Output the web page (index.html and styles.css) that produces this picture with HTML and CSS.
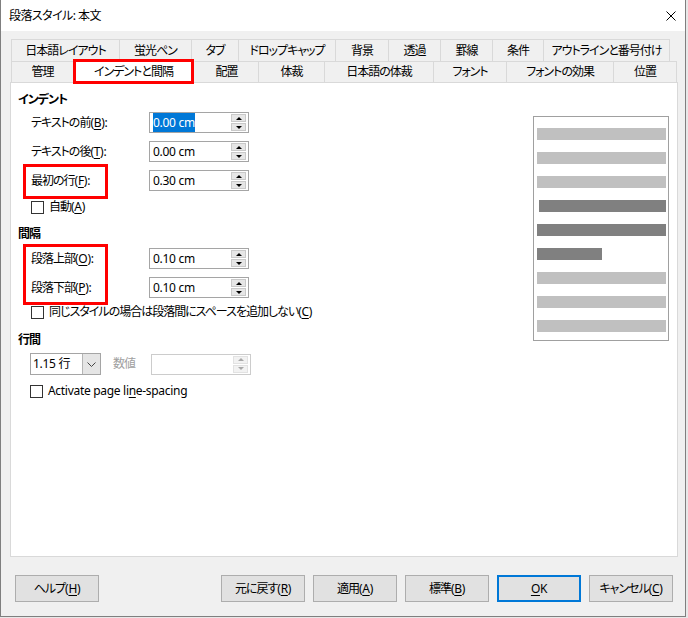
FILE: index.html
```html
<!DOCTYPE html>
<html lang="ja">
<head>
<meta charset="utf-8">
<title>段落スタイル: 本文</title>
<link rel="stylesheet" href="styles.css">
</head>
<body>
<div class="window">
  <div class="titlebar">
    <span class="title">段落スタイル: 本文</span>
    <svg class="close" width="10" height="10" viewBox="0 0 10 10"><path d="M0.5 0.5 L9.5 9.5 M9.5 0.5 L0.5 9.5" stroke="#000" stroke-width="1" fill="none"/></svg>
  </div>
  <div class="content">
    <div class="tabrow r1">
      <div class="tab w108">日本語レイアウト</div>
      <div class="tab w72">蛍光ペン</div>
      <div class="tab w47">タブ</div>
      <div class="tab w97">ドロップキャップ</div>
      <div class="tab w53">背景</div>
      <div class="tab w52">透過</div>
      <div class="tab w52">罫線</div>
      <div class="tab w51">条件</div>
      <div class="tab w127 last">アウトラインと番号付け</div>
    </div>
    <div class="tabrow r2">
      <div class="tab w62">管理</div>
      <div class="tab sel w121">インデントと間隔</div>
      <div class="tab w64 after-sel">配置</div>
      <div class="tab w66">体裁</div>
      <div class="tab w109">日本語の体裁</div>
      <div class="tab w73">フォント</div>
      <div class="tab w107">フォントの効果</div>
      <div class="tab w64 last">位置</div>
    </div>
    <div class="panel">
      <div class="form">
        <div class="hdr">インデント</div>
        <div class="frow g4">
          <span class="lbl">テキストの前<span class="latin">(<u>B</u>):</span></span>
          <div class="spin-field"><span class="val"><span class="selected">0.00 cm</span></span><span class="spin"><i class="up"></i><i class="dn"></i></span></div>
        </div>
        <div class="frow g8">
          <span class="lbl">テキストの後<span class="latin">(<u>T</u>):</span></span>
          <div class="spin-field"><span class="val">0.00 cm</span><span class="spin"><i class="up"></i><i class="dn"></i></span></div>
        </div>
        <div class="frow g8 annot annot-one">
          <span class="lbl">最初の行<span class="latin">(<u>F</u>):</span></span>
          <div class="spin-field"><span class="val">0.30 cm</span><span class="spin"><i class="up"></i><i class="dn"></i></span></div>
        </div>
        <div class="crow g8"><span class="box"></span><span>自動<span class="latin">(<u>A</u>)</span></span></div>

        <div class="hdr g11">間隔</div>
        <div class="group g6 annot annot-two">
          <div class="frow">
            <span class="lbl">段落上部<span class="latin">(<u>O</u>):</span></span>
            <div class="spin-field"><span class="val">0.10 cm</span><span class="spin"><i class="up"></i><i class="dn"></i></span></div>
          </div>
          <div class="frow g8">
            <span class="lbl">段落下部<span class="latin">(<u>P</u>):</span></span>
            <div class="spin-field"><span class="val">0.10 cm</span><span class="spin"><i class="up"></i><i class="dn"></i></span></div>
          </div>
        </div>
        <div class="crow g6"><span class="box"></span><span>同じスタイルの場合は段落間にスペースを追加しない<span class="latin">(<u>C</u>)</span></span></div>

        <div class="hdr g12">行間</div>
        <div class="drow g5">
          <div class="dropdown">
            <span class="dd-text">1.15 行</span>
            <span class="dd-btn"><svg width="9" height="5" viewBox="0 0 9 5"><path d="M0.5 0.5 L4.5 4.5 L8.5 0.5" stroke="#444" stroke-width="1" fill="none"/></svg></span>
          </div>
          <span class="num-lbl">数値</span>
          <div class="spin-field disabled"><span class="val"></span><span class="spin"><i class="up"></i><i class="dn"></i></span></div>
        </div>
        <div class="crow g8 c-act"><span class="box"></span><span class="latin">Activate page li<u>n</u>e-spacing</span></div>
      </div>
      <div class="preview">
        <div class="bar"></div>
        <div class="bar"></div>
        <div class="bar"></div>
        <div class="bar dark indent"></div>
        <div class="bar dark"></div>
        <div class="bar dark short"></div>
        <div class="bar"></div>
        <div class="bar"></div>
        <div class="bar"></div>
      </div>
    </div>
    <div class="footer">
      <div class="btn">ヘルプ<span class="latin">(<u>H</u>)</span></div>
      <div class="btn-group">
        <div class="btn">元に戻す<span class="latin">(<u>R</u>)</span></div>
        <div class="btn">適用<span class="latin">(<u>A</u>)</span></div>
        <div class="btn">標準<span class="latin">(<u>B</u>)</span></div>
        <div class="btn default"><span class="latin"><u>O</u>K</span></div>
        <div class="btn">キャンセル<span class="latin">(<u>C</u>)</span></div>
      </div>
    </div>
  </div>
</div>
</body>
</html>
```
FILE: styles.css
```css
* { box-sizing: border-box; }
html, body { margin: 0; padding: 0; }
body {
  width: 688px;
  height: 618px;
  overflow: hidden;
  background: #e8e8e8;
  font-family: "Noto Sans", "Noto Sans CJK JP", sans-serif;
  font-size: 12px;
  line-height: 16px;
  color: #000;
  font-feature-settings: "palt" 1;
  letter-spacing: -1px;
}
.latin, .val, .dd-text { letter-spacing: -0.3px; }
u { text-decoration: underline; text-underline-offset: 2px; text-decoration-thickness: 1px; }

.window {
  width: 686px;
  height: 617px;
  border: 1px solid #7f7f7f;
  border-top: none;
  background: #f0f0f0;
  display: flex;
  flex-direction: column;
}
.titlebar {
  flex: none;
  height: 31px;
  background: #fff;
  display: flex;
  align-items: center;
  justify-content: space-between;
  padding: 0 9px 0 8px;
}
.title { font-size: 12px; letter-spacing: -0.55px; }
.close { display: block; }

.content {
  flex: 1;
  display: flex;
  flex-direction: column;
  padding: 8px 7px 0 9px;
}

/* tabs */
.tabrow { display: flex; margin-left: 1px; flex: none; }
.tabrow.r1 { height: 22px; }
.tabrow.r2 { height: 21px; }
.tab {
  flex: none;
  height: 100%;
  border-left: 1px solid #d9d9d9;
  border-top: 1px solid #d9d9d9;
  background: #f0f0f0;
  display: flex;
  align-items: center;
  justify-content: center;
  white-space: nowrap;
}
.tab.last { border-right: 1px solid #d9d9d9; }
.tab.sel {
  height: 25px;
  margin-top: -2px;
  border: 3px solid #ff0000;
  background: #fff;
  position: relative;
  z-index: 1;
}
.tab.after-sel { border-left-color: transparent; }
.w47 { width: 47px; } .w51 { width: 51px; } .w52 { width: 52px; } .w53 { width: 53px; }
.w62 { width: 62px; } .w64 { width: 64px; } .w66 { width: 66px; } .w72 { width: 72px; }
.w73 { width: 73px; } .w97 { width: 97px; } .w107 { width: 107px; } .w108 { width: 108px; }
.w109 { width: 109px; } .w121 { width: 121px; } .w127 { width: 127px; }

/* panel */
.panel {
  flex: none;
  width: 668px;
  height: 475px;
  border: 1px solid #d9d9d9;
  background: #fff;
  display: flex;
}
.form { flex: 1; padding: 9px 0 0 7px; display: flex; flex-direction: column; }
.hdr { height: 16px; font-weight: 700; }
.g4 { margin-top: 4px; } .g5 { margin-top: 5px; } .g6 { margin-top: 6px; }
.g8 { margin-top: 8px; } .g11 { margin-top: 11px; } .g12 { margin-top: 12px; }

.frow { height: 21px; display: flex; align-items: center; padding-left: 13px; }
.lbl { width: 118px; flex: none; white-space: nowrap; }
.group { display: flex; flex-direction: column; }
.annot { position: relative; }
.annot::before {
  content: "";
  position: absolute;
  left: 5px;
  width: 79px;
  border: 3px solid #ff0000;
  pointer-events: none;
}
.annot-one::before { top: -6px; height: 29px; }
.annot-two::before { top: -4px; height: 55px; }

.spin-field {
  flex: none;
  width: 100px;
  height: 21px;
  border: 1px solid #a5a5a5;
  background: #fff;
  display: flex;
  align-items: center;
}
.val { flex: 1; padding-left: 3px; white-space: nowrap; }
.selected { background: #0078d7; color: #fff; padding: 1px 0; }
.spin {
  flex: none;
  width: 15px;
  height: 17px;
  margin-right: 2px;
  display: flex;
  flex-direction: column;
  gap: 1px;
}
.spin i {
  flex: 1;
  background: #e6e6e6;
  border: 1px solid #c9c9c9;
  display: flex;
  align-items: center;
  justify-content: center;
}
.spin i::after {
  content: "";
  width: 0;
  height: 0;
  border-left: 3px solid transparent;
  border-right: 3px solid transparent;
}
.spin .up::after { border-bottom: 3px solid #000; }
.spin .dn::after { border-top: 3px solid #000; }
.spin-field.disabled { border-color: #cccccc; }
.spin-field.disabled .spin i { background: #f2f2f2; border-color: #e2e2e2; }
.spin-field.disabled .spin .up::after { border-bottom-color: #a8a8a8; }
.spin-field.disabled .spin .dn::after { border-top-color: #a8a8a8; }

.crow { height: 16px; display: flex; align-items: center; padding-left: 13px; gap: 5px; white-space: nowrap; }
.crow.c-act { padding-left: 12px; }
.box { flex: none; width: 13px; height: 13px; border: 1px solid #333; background: #fff; }

.drow { height: 22px; display: flex; align-items: center; padding-left: 12px; }
.dropdown {
  flex: none;
  width: 71px;
  height: 22px;
  border: 1px solid #a5a5a5;
  display: flex;
}
.dd-text { flex: 1; padding-left: 2px; display: flex; align-items: center; }
.dd-btn {
  width: 18px;
  background: #e5e5e5;
  border-left: 1px solid #b5b5b5;
  display: flex;
  align-items: center;
  justify-content: center;
}
.dd-btn svg { display: block; }
.num-lbl { width: 50px; padding-left: 12px; color: #a0a0a0; flex: none; }

/* preview */
.preview {
  flex: none;
  width: 136px;
  height: 225px;
  margin: 33px 8px 0 auto;
  border: 1px solid #a0a0a0;
  background: #fff;
  padding: 11px 2px 0 3px;
  display: flex;
  flex-direction: column;
  gap: 12px;
}
.bar { height: 12px; background: #c0c0c0; flex: none; }
.bar.dark { background: #808080; }
.bar.indent { margin-left: 2px; }
.bar.short { width: 65px; }

/* footer */
.footer {
  flex: none;
  margin-top: 18px;
  padding: 0 5px 0 5px;
  display: flex;
  justify-content: space-between;
}
.btn-group { display: flex; gap: 8px; }
.btn {
  width: 84px;
  height: 27px;
  border: 1px solid #adadad;
  background: #e1e1e1;
  display: flex;
  align-items: center;
  justify-content: center;
  white-space: nowrap;
}
.btn.default { border: 2px solid #0078d7; }
```
